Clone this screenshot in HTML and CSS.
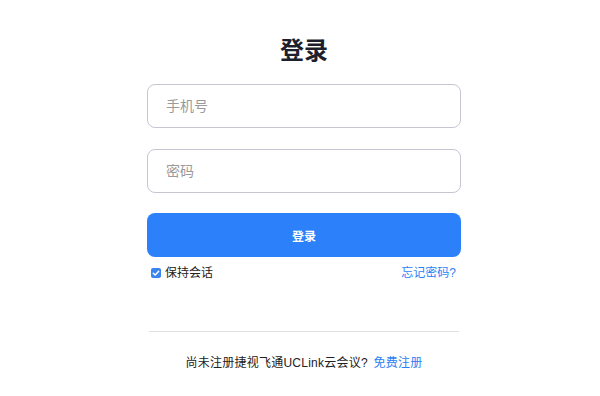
FILE: index.html
```html
<!DOCTYPE html>
<html lang="zh-CN">
<head>
<meta charset="utf-8">
<title>登录</title>
<link rel="stylesheet" href="styles.css">
</head>
<body>
<div class="login">
  <h1 class="title">登录</h1>
  <div class="field"><input class="input" type="text" placeholder="手机号"></div>
  <div class="field field-gap"><input class="input" type="password" placeholder="密码"></div>
  <button class="btn">登录</button>
  <div class="options">
    <label class="keep">
      <span class="check"><svg viewBox="0 0 10 10" width="10" height="10"><path d="M2.3 5.2 L4.2 7 L7.7 3.2" fill="none" stroke="#fff" stroke-width="1.5" stroke-linecap="round" stroke-linejoin="round"/></svg></span>
      <span>保持会话</span>
    </label>
    <a class="link" href="#">忘记密码?</a>
  </div>
  <div class="divider"></div>
  <p class="footer">尚未注册捷视飞通UCLink云会议? <a class="link" href="#">免费注册</a></p>
</div>
</body>
</html>
```

FILE: styles.css
```css
* { box-sizing: border-box; }
body {
  margin: 0;
  background: #fff;
  font-family: "Liberation Sans", "Noto Sans CJK SC", sans-serif;
  color: #222;
}
.login {
  width: 314px;
  margin-left: 147px;
  padding-top: 35px;
  display: flex;
  flex-direction: column;
}
.title {
  margin: 0;
  font-size: 24px;
  line-height: 32px;
  font-weight: 700;
  color: #1e1f2c;
  text-align: center;
}
.field { margin-top: 17px; }
.field-gap { margin-top: 21px; }
.input {
  width: 100%;
  height: 44px;
  border: 1px solid #c6c6d3;
  border-radius: 8px;
  padding: 0 18px;
  font-family: inherit;
  font-size: 14px;
  color: #222;
  outline: none;
  background: #fff;
}
.input::placeholder { color: #9a9a9a; }
.btn {
  margin-top: 20px;
  height: 44px;
  width: 100%;
  border: none;
  border-radius: 8px;
  background: #2c81fb;
  color: #fff;
  font-family: inherit;
  font-size: 12px;
  font-weight: 700;
}
.options {
  margin-top: 8px;
  height: 16px;
  display: flex;
  justify-content: space-between;
  align-items: center;
  padding: 0 5px 0 4px;
  font-size: 12px;
  line-height: 16px;
}
.keep {
  display: flex;
  align-items: center;
  gap: 4px;
  color: #222;
}
.check {
  width: 10px;
  height: 10px;
  border-radius: 2px;
  background: #3a84f0;
  display: flex;
}
.link {
  color: #2b7ff5;
  text-decoration: none;
}
.divider {
  margin: 50px 2px 0;
  height: 1px;
  background: #dedee3;
}
.footer {
  margin: 21px 0 0;
  font-size: 12px;
  line-height: 20px;
  letter-spacing: 0.25px;
  word-spacing: 2px;
  text-align: center;
  color: #222;
}
```
